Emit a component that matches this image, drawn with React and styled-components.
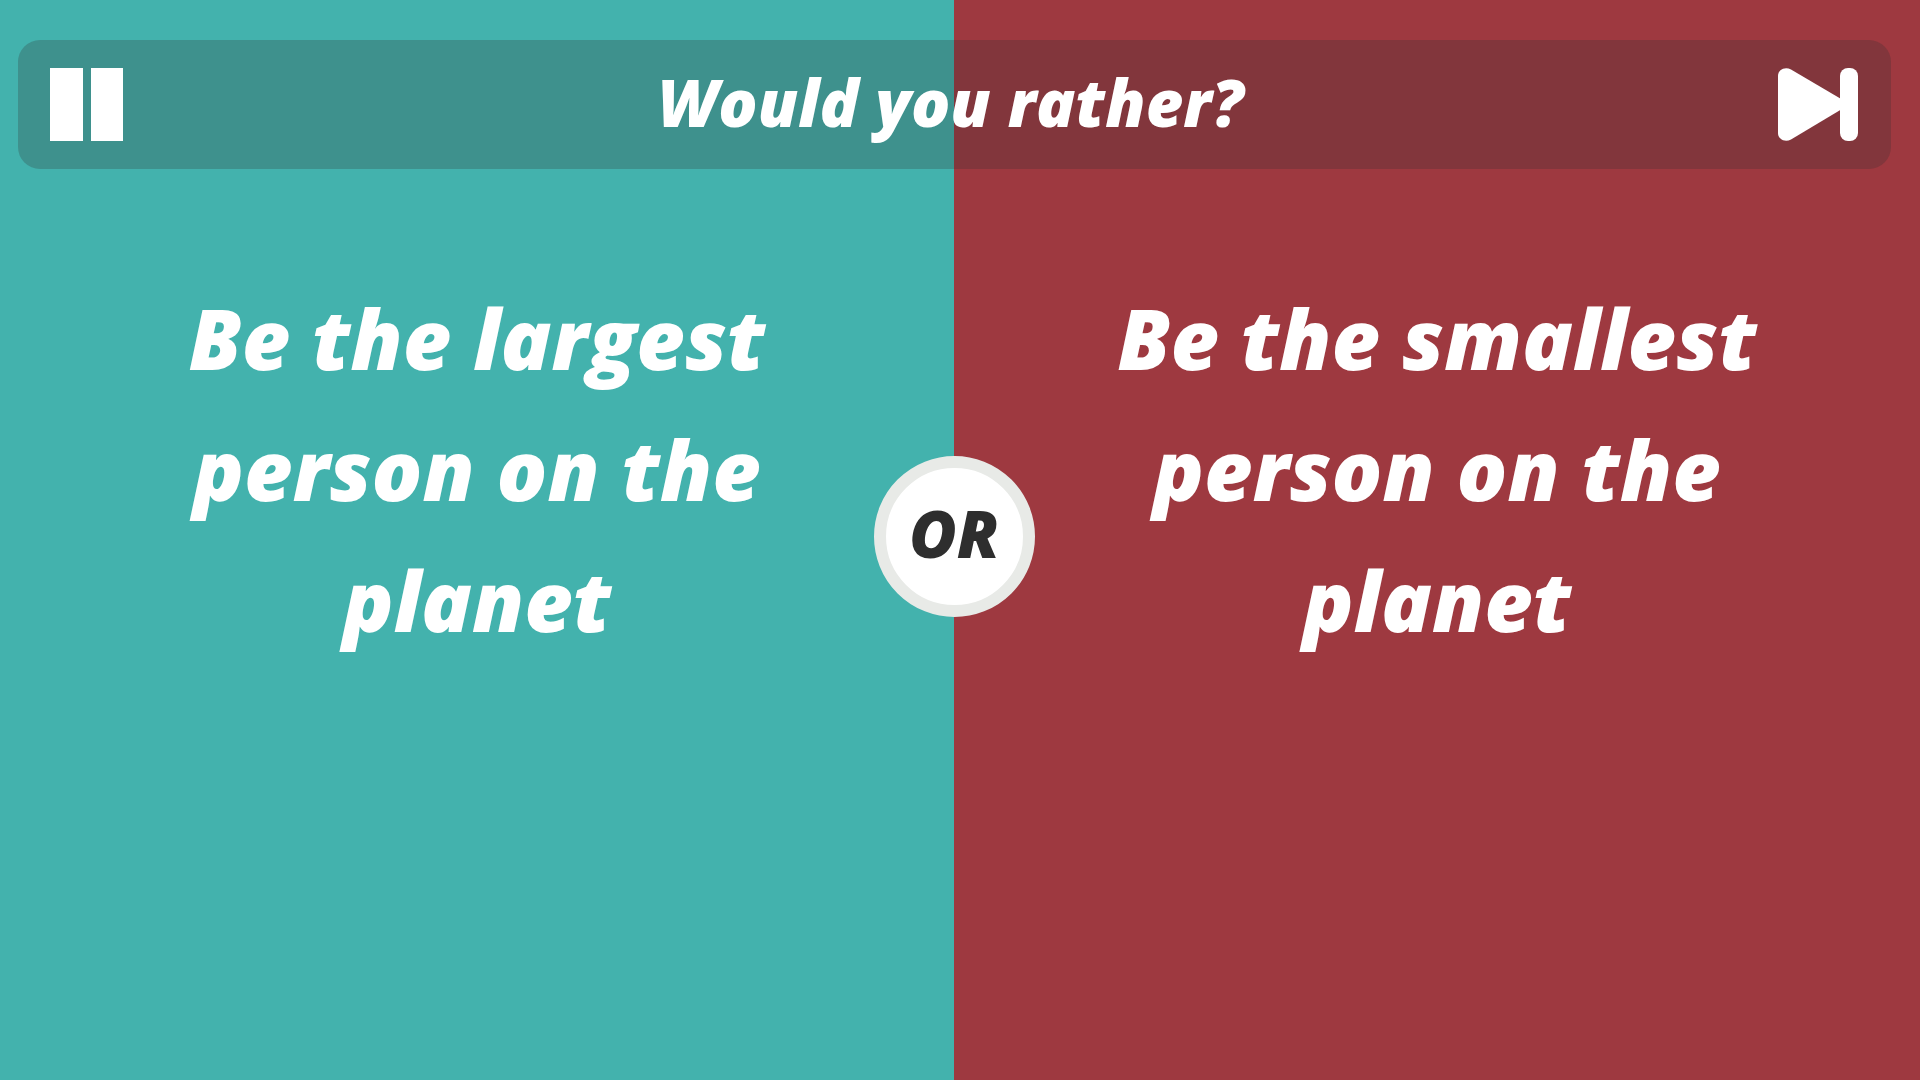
import React, { useState } from "react";
import styled, { createGlobalStyle } from "styled-components";

const GlobalStyle = createGlobalStyle`
  * {
    box-sizing: border-box;
  }

  body {
    margin: 0;
    font-family: "Open Sans", Lato, sans-serif;
    font-weight: 800;
    font-style: italic;
  }
`;

// header, options and badge share the same grid, so they can overlap
const Page = styled.main`
  display: grid;
  grid-template-columns: calc(50% - 6px) 1fr;
  grid-template-rows: auto 1fr;
  min-height: 100vh;
`;

const Header = styled.header`
  grid-column: 1 / -1;
  grid-row: 1;
  z-index: 1;
  display: flex;
  align-items: center;
  justify-content: space-between;
  margin: 40px 29px 0 18px;
  padding: 28px 33px 28px 32px;
  border-radius: 22px;
  background-color: rgba(46, 46, 46, 0.25);
`;

const Title = styled.h1`
  margin: 0;
  padding-bottom: 6px;
  color: #fff;
  font-size: 65px;
  font-weight: 800;
  line-height: 66px;
`;

const IconButton = styled.button`
  display: flex;
  padding: 0;
  border: none;
  background: none;
  color: #fff;
  cursor: pointer;
`;

const Option = styled.button`
  grid-column: ${(props) => props.$column};
  grid-row: 1 / -1;
  display: flex;
  align-items: flex-start;
  justify-content: center;
  padding: 272px 120px 40px;
  border: none;
  background-color: ${(props) => props.$color};
  color: #fff;
  font: inherit;
  font-size: 84px;
  line-height: 131px;
  text-align: center;
  cursor: pointer;
`;

const OptionText = styled.span`
  max-width: 660px;
`;

const Badge = styled.div`
  grid-column: 1 / -1;
  grid-row: 1 / -1;
  place-self: center;
  z-index: 1;
  display: flex;
  align-items: center;
  justify-content: center;
  width: 161px;
  height: 161px;
  margin: 0 12px 8px 0;
  padding-bottom: 6px;
  border: 12px solid #e8eae7;
  border-radius: 50%;
  background-color: #fff;
  color: #2e2e2e;
  font-size: 65px;
  line-height: 66px;
  pointer-events: none;
`;

const options = [
  { id: 1, text: "Be the largest person on the planet", color: "#43b2ad" },
  { id: 2, text: "Be the smallest person on the planet", color: "#9e3940" },
];

const PauseIcon = () => (
  <svg width="73" height="73" viewBox="0 0 73 73" fill="currentColor">
    <rect width="33" height="73" />
    <rect x="41" width="32" height="73" />
  </svg>
);

const SkipIcon = () => (
  <svg width="80" height="73" viewBox="0 0 80 73" fill="currentColor">
    <path d="M0 8C0 1.5 7-1.5 13 1.5L64 31.5V41L13 71.5C7 74.5 0 71.5 0 65Z" />
    <rect x="62" width="18" height="73" rx="8" />
  </svg>
);

const App = () => {
  const [paused, setPaused] = useState(false);

  return (
    <>
      <GlobalStyle />
      <Page>
        <Header>
          <IconButton
            aria-label="Pause"
            aria-pressed={paused}
            onClick={() => setPaused(!paused)}
          >
            <PauseIcon />
          </IconButton>
          <Title>Would you rather?</Title>
          <IconButton aria-label="Skip">
            <SkipIcon />
          </IconButton>
        </Header>
        {options.map((option) => (
          <Option key={option.id} $column={option.id} $color={option.color}>
            <OptionText>{option.text}</OptionText>
          </Option>
        ))}
        <Badge>OR</Badge>
      </Page>
    </>
  );
};

export default App;
